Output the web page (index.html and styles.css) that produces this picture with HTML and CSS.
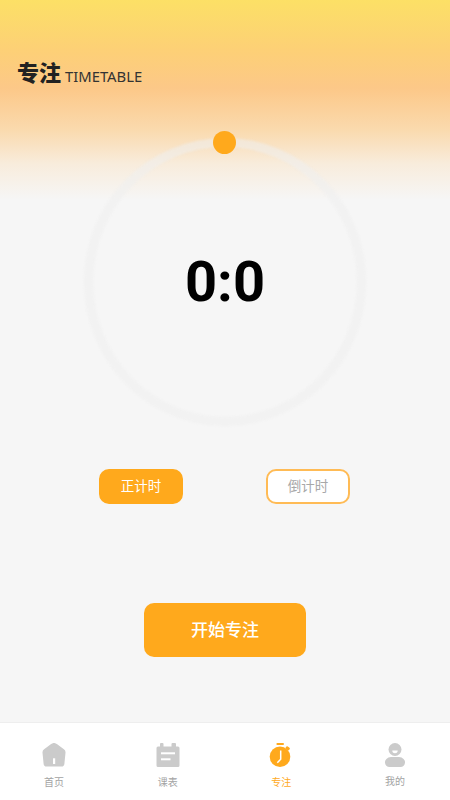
FILE: index.html
```html
<!DOCTYPE html>
<html lang="zh">
<head>
<meta charset="utf-8">
<title>专注</title>
<link rel="stylesheet" href="styles.css">
</head>
<body>
<div class="app">
  <main class="page">
    <header class="head">
      <span class="title">专注</span><span class="sub">TIMETABLE</span>
    </header>
    <section class="dial">
      <div class="ring"><span class="time">0:0</span></div>
      <span class="knob"></span>
    </section>
    <section class="modes">
      <button class="mode on">正计时</button>
      <button class="mode">倒计时</button>
    </section>
    <div class="start-wrap"><button class="start">开始专注</button></div>
  </main>
  <nav class="tabs">
    <div class="tab">
      <svg class="ico" viewBox="0 0 24 24"><path fill="#cbcbcb" d="M8.800 1.300a5 5 0 0 1 6.400 0l6.700 5a3.800 3.800 0 0 1 1.600 3.500l-1.100 10.900a3 3 0 0 1-3 2.800H4.600a3 3 0 0 1-3-2.800L.5 9.800a3.800 3.800 0 0 1 1.600-3.500z"/><rect x="11" y="15.300" width="2.200" height="5.700" fill="#fff"/></svg>
      <span>首页</span>
    </div>
    <div class="tab">
      <svg class="ico" viewBox="0 0 24 24"><path fill="#cbcbcb" d="M4 1a1 1 0 0 1 1-1h1.500a1 1 0 0 1 1 1v2.500h8V1a1 1 0 0 1 1-1H19a1 1 0 0 1 1 1v2.500h2a1.500 1.500 0 0 1 1.500 1.500v17.500A1.500 1.500 0 0 1 22 24H2A1.500 1.500 0 0 1 .5 22.500V5A1.500 1.500 0 0 1 2 3.500h2z"/><rect x="5" y="9.300" width="14" height="2" fill="#fff"/><rect x="5" y="15.300" width="9.500" height="2" fill="#fff"/></svg>
      <span>课表</span>
    </div>
    <div class="tab active">
      <svg class="ico" viewBox="0 0 24 24"><rect x="7.400" y="0" width="7.600" height="2" rx="1" fill="#ffa91c"/><rect x="16.600" y="3.800" width="4.200" height="3" rx="1" transform="rotate(40 18.700 5.300)" fill="#ffa91c"/><circle cx="11" cy="13.700" r="10.300" fill="#ffa91c"/><path d="M11.700 7.500v8.800l-3.400 3.400" fill="none" stroke="#fff" stroke-width="1.500"/></svg>
      <span>专注</span>
    </div>
    <div class="tab person">
      <svg class="ico" viewBox="0 0 24 24"><circle cx="12" cy="6.500" r="6.500" fill="#cbcbcb"/><path fill="#fff" d="M9.300 7.500h5.400a2.700 2.700 0 0 1-5.400 0z"/><path fill="#cbcbcb" d="M8 14h8a7 5 0 0 1 6 5.500a4.500 4.500 0 0 1-4.500 4.500h-11A4.500 4.500 0 0 1 2 19.500A7 5 0 0 1 8 14z"/></svg>
      <span>我的</span>
    </div>
  </nav>
</div>
</body>
</html>
```
FILE: styles.css
```css
* { box-sizing: border-box; }
html, body { margin: 0; padding: 0; height: 100%; }
body { font-family: Roboto, "Noto Sans CJK SC", sans-serif; background: #f6f6f6; }
.app { width: 450px; height: 800px; display: flex; flex-direction: column; overflow: hidden; }
.page {
  flex: 1;
  display: flex;
  flex-direction: column;
  background: linear-gradient(180deg, #fce066 0%, #fdd076 25%, #fcc888 44%, #fadaae 65%, #f8ecdc 82%, #f6f6f6 100%) no-repeat;
  background-size: 100% 200px;
}
.head { padding: 58px 17px 0; height: 131px; color: #222; line-height: 32px; }
.title { font-size: 22px; font-weight: 900; }
.sub { font-size: 14.800px; margin-left: 4px; vertical-align: -1px; font-family: "Noto Sans", sans-serif; color: #333; }
.dial { position: relative; display: flex; justify-content: center; height: 338px; padding-top: 7px; }
.ring {
  position: relative; width: 282px; height: 288px;
  display: flex; align-items: center; justify-content: center;
}
.ring::before {
  content: ""; position: absolute; inset: 0; border-radius: 50%;
  border: 9px solid rgba(238, 238, 238, 0.55); filter: blur(1px);
}
.time { position: relative; font-size: 56px; font-weight: 700; color: #000; line-height: 1; }
.knob { position: absolute; left: 213px; top: 0; width: 23px; height: 23px; border-radius: 50%; background: #ffa91c; }
.modes { display: flex; justify-content: center; gap: 83px; padding-right: 1px; }
.mode {
  width: 84px; height: 35px; border-radius: 10px; border: 2px solid #ffbb55; background: #fff;
  color: #a8a8a8; font: 13.500px "Noto Sans CJK SC", sans-serif; padding: 0 0 3px;
}
.mode.on { background: #ffa91c; border-color: #ffa91c; color: #fff; }
.start-wrap { display: flex; justify-content: center; margin-top: 99px; }
.start {
  width: 162px; height: 54px; border-radius: 10px; border: 0; background: #ffa91c;
  color: #fff; font: 500 17px "Noto Sans CJK SC", sans-serif; padding: 0 0 3px;
}
.tabs { height: 78px; background: #fff; display: flex; justify-content: center; padding-right: 1px; border-top: 1px solid #eee; }
.tab { flex: 0 0 113.600px; display: flex; flex-direction: column; align-items: center; padding-top: 20px; font-size: 10px; color: #a3a3a3; font-family: "Noto Sans CJK SC", sans-serif; }
.tab.active { color: #ffa91c; }
.ico { width: 24px; height: 24px; margin-bottom: 7px; display: block; }
.tab.person .ico { margin-bottom: 6px; }
.tab span { line-height: 15px; }
```
